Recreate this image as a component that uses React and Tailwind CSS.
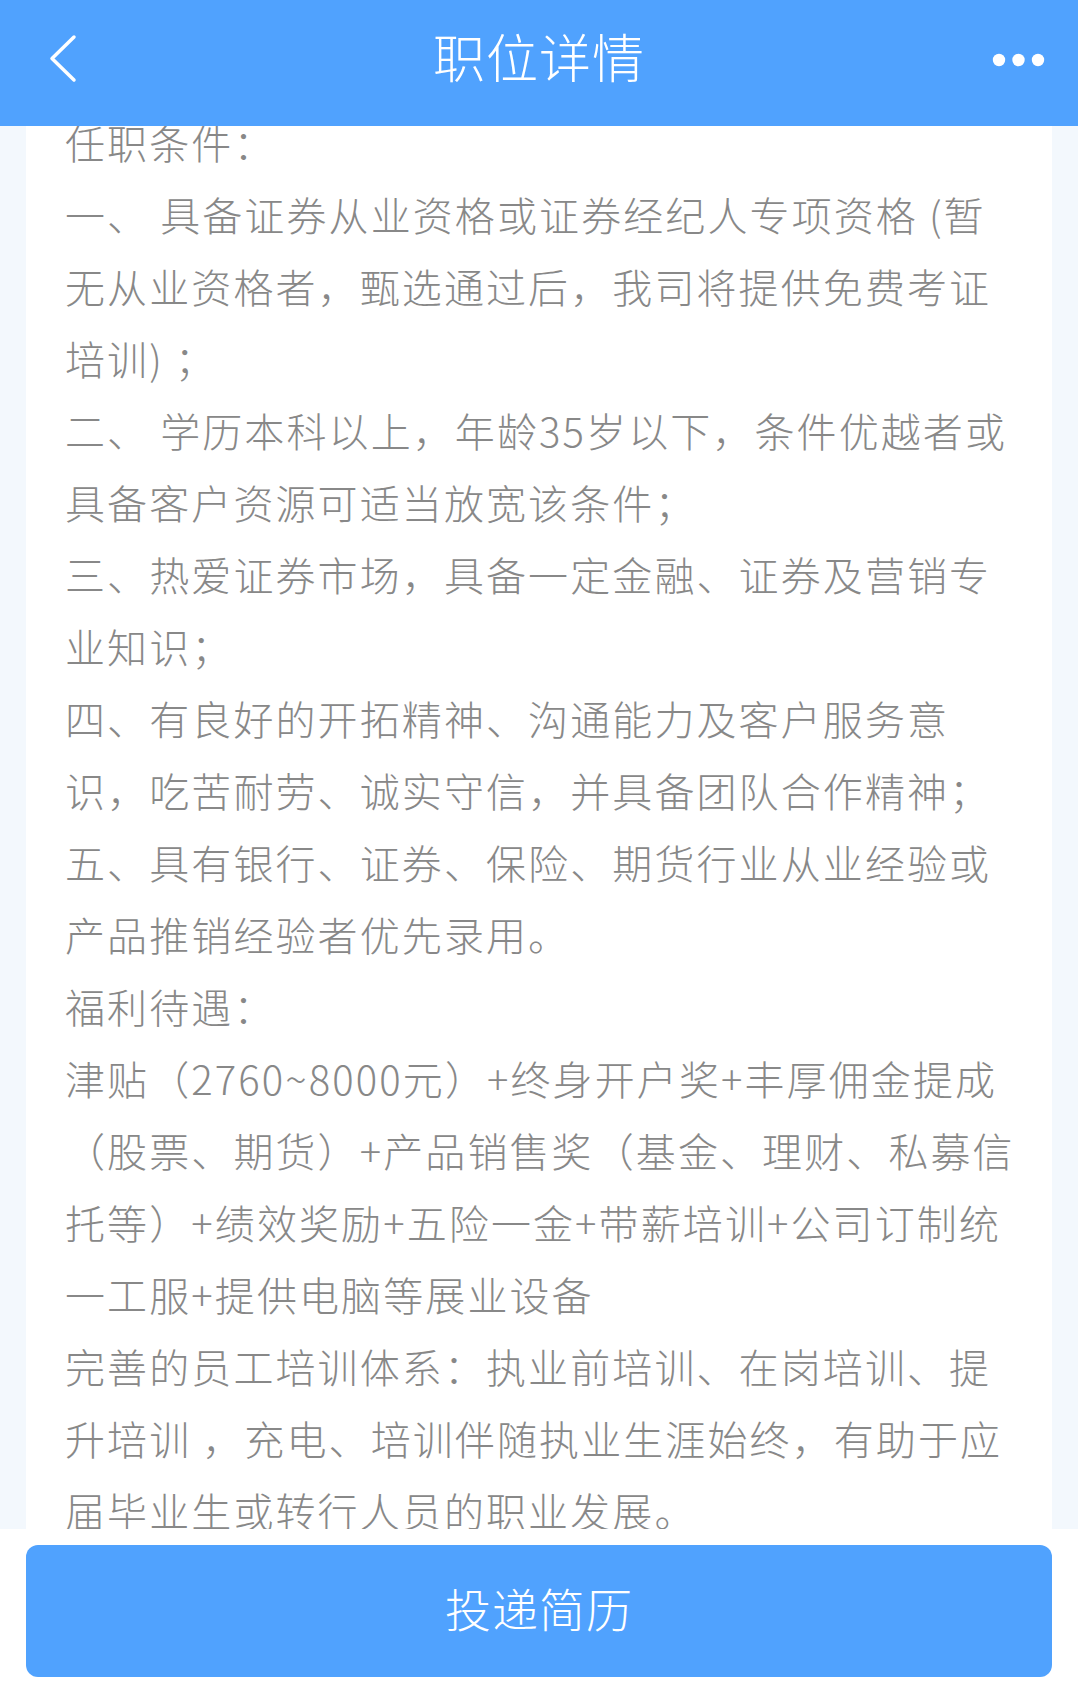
import React from "react";

const lines = [
  "任职条件：",
  "一、 具备证券从业资格或证券经纪人专项资格 (暂",
  "无从业资格者，甄选通过后，我司将提供免费考证",
  "培训) ；",
  "二、 学历本科以上，年龄35岁以下，条件优越者或",
  "具备客户资源可适当放宽该条件；",
  "三、热爱证券市场，具备一定金融、证券及营销专",
  "业知识；",
  "四、有良好的开拓精神、沟通能力及客户服务意",
  "识，吃苦耐劳、诚实守信，并具备团队合作精神；",
  "五、具有银行、证券、保险、期货行业从业经验或",
  "产品推销经验者优先录用。",
  "福利待遇：",
  "津贴（2760~8000元）+终身开户奖+丰厚佣金提成",
  "（股票、期货）+产品销售奖（基金、理财、私募信",
  "托等）+绩效奖励+五险一金+带薪培训+公司订制统",
  "一工服+提供电脑等展业设备",
  "完善的员工培训体系：执业前培训、在岗培训、提",
  "升培训 ，充电、培训伴随执业生涯始终，有助于应",
  "届毕业生或转行人员的职业发展。",
];

export default function App() {
  return (
    <div className="w-[1078px] h-[1692px] flex flex-col bg-white overflow-hidden font-['Noto_Sans_CJK_SC','Noto_Sans',sans-serif]">
      <header className="h-[126px] shrink-0 bg-[#50a2fe] relative z-10">
        <div className="h-[116px] flex items-center">
          <div className="w-[100px] h-[116px] shrink-0">
            <svg width="100" height="116" viewBox="0 0 100 116">
              <path d="M74 37 L52 58.5 L74 80" fill="none" stroke="#ffffff" strokeWidth="3.5" strokeLinecap="round" strokeLinejoin="round" />
            </svg>
          </div>
          <div className="flex-1 text-center text-white text-[52px] font-light leading-[116px] tracking-[1px] pb-[4px]">
            职位详情
          </div>
          <div className="w-[100px] h-[116px] shrink-0">
            <svg width="100" height="116" viewBox="978 0 100 116">
              <circle cx="999" cy="60" r="6.2" fill="#ffffff" />
              <circle cx="1018.5" cy="60" r="6.2" fill="#ffffff" />
              <circle cx="1038" cy="60" r="6.2" fill="#ffffff" />
            </svg>
          </div>
        </div>
      </header>
      <main className="flex-1 min-h-0 overflow-hidden bg-[#f3f8fd] px-[26px]">
        <div className="h-full bg-white overflow-hidden pl-[39px]">
          <div className="mt-[-20px] text-[40px] font-light leading-[72px] tracking-[2.1px] text-[#888888]">
            {lines.map((l, i) => (
              <div key={i} className="whitespace-pre">
                {l}
              </div>
            ))}
          </div>
        </div>
      </main>
      <footer className="h-[163px] shrink-0 bg-white px-[26px] pt-[16px]">
        <button className="w-full h-[132px] rounded-[12px] bg-[#50a2fe] text-white text-[46px] font-light tracking-[1px] pb-[8px] font-['Noto_Sans_CJK_SC',sans-serif]">
          投递简历
        </button>
      </footer>
    </div>
  );
}
